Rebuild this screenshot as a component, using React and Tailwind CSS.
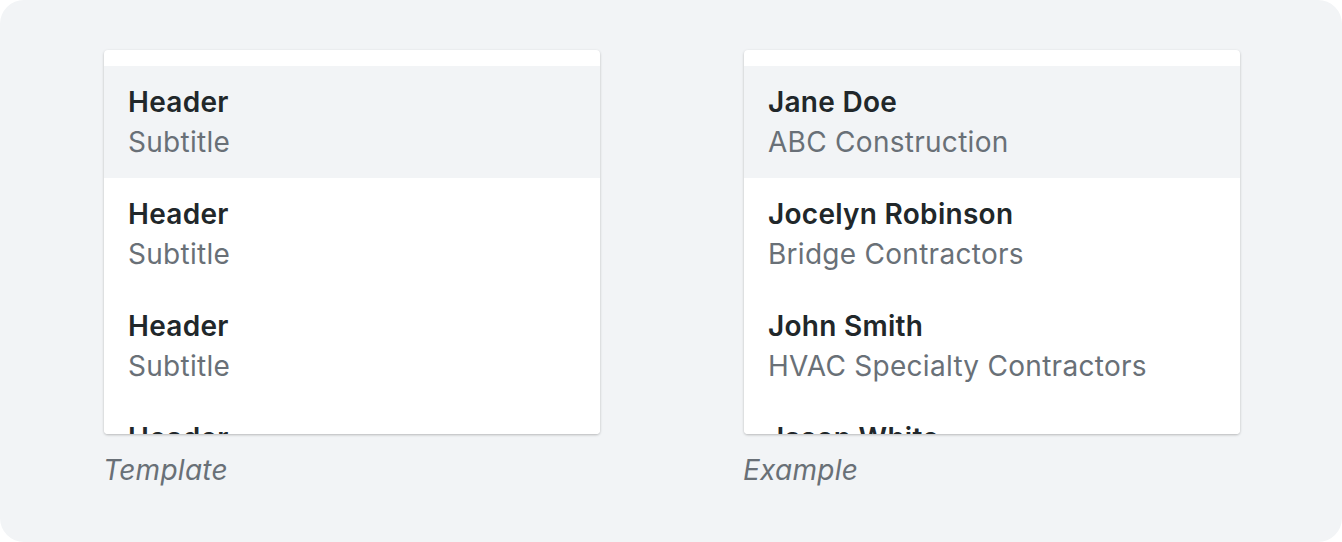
const columns = [
  {
    label: "Template",
    items: [
      { title: "Header", subtitle: "Subtitle" },
      { title: "Header", subtitle: "Subtitle" },
      { title: "Header", subtitle: "Subtitle" },
      { title: "Header", subtitle: "Subtitle" },
    ],
  },
  {
    label: "Example",
    items: [
      { title: "Jane Doe", subtitle: "ABC Construction" },
      { title: "Jocelyn Robinson", subtitle: "Bridge Contractors" },
      { title: "John Smith", subtitle: "HVAC Specialty Contractors" },
      { title: "Jason White", subtitle: "White Electric" },
    ],
  },
];

function ListCard({ items }) {
  return (
    <div className="w-[496px] h-[384px] overflow-hidden rounded bg-white pt-4 shadow-[0_1px_3px_rgba(0,0,0,0.18),0_1px_2px_rgba(0,0,0,0.08)]">
      {items.map((item, i) => (
        <div
          key={i}
          className={`px-6 py-4 ${i === 0 ? "bg-[#f2f4f6]" : "bg-white"}`}
        >
          <div className="text-[28px] leading-10 tracking-[0.01em] font-semibold text-[#21272a]">
            {item.title}
          </div>
          <div className="text-[28px] leading-10 tracking-[0.01em] text-[#697077]">
            {item.subtitle}
          </div>
        </div>
      ))}
    </div>
  );
}

export default function App() {
  return (
    <div className="bg-white min-h-screen font-['Inter',sans-serif]">
      <div className="w-[1342px] h-[542px] rounded-3xl bg-[#f2f4f6] pl-[104px] pt-[50px] flex gap-[144px]">
        {columns.map((col) => (
          <div key={col.label} className="flex flex-col">
            <ListCard items={col.items} />
            <p className="mt-4 -ml-px text-[28px] leading-10 tracking-[0.01em] italic text-[#697077]">
              {col.label}
            </p>
          </div>
        ))}
      </div>
    </div>
  );
}
